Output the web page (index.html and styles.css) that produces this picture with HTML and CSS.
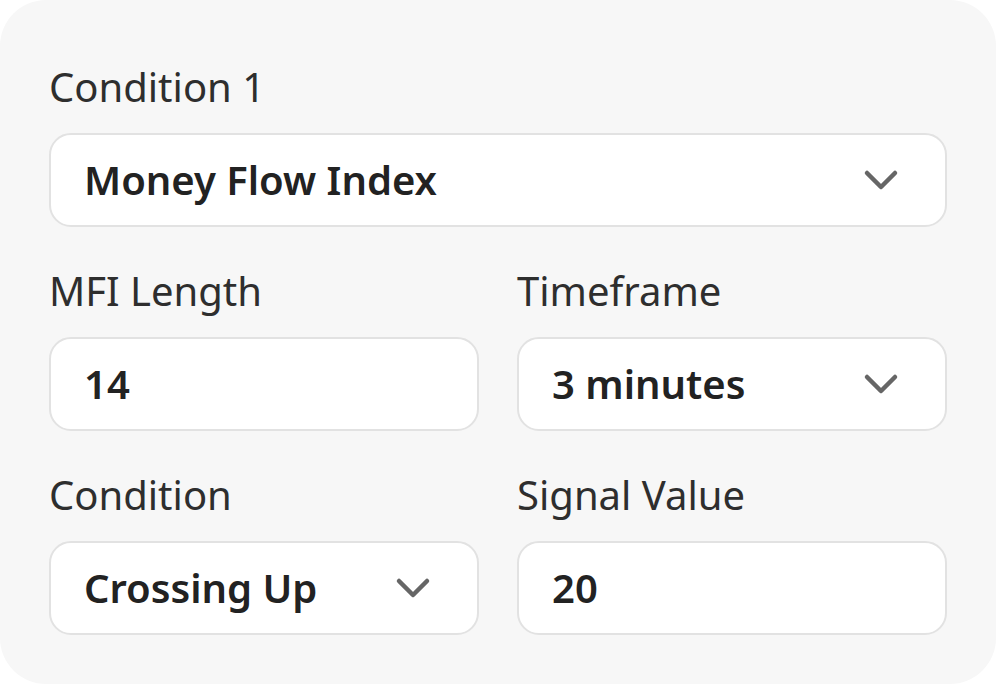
FILE: index.html
```html
<!DOCTYPE html>
<html lang="en">
<head>
<meta charset="utf-8">
<title>Condition</title>
<link rel="stylesheet" href="styles.css">
</head>
<body>
<div class="card">
  <div class="field">
    <div class="label">Condition 1</div>
    <div class="box">
      <span class="value">Money Flow Index</span>
      <svg class="chev" viewBox="0 0 36 22" width="36" height="22"><path d="M4 4 L18 18 L32 4" fill="none" stroke="#666" stroke-width="4.5" stroke-linecap="round" stroke-linejoin="round"/></svg>
    </div>
  </div>
  <div class="row">
    <div class="field">
      <div class="label">MFI Length</div>
      <div class="box"><span class="value">14</span></div>
    </div>
    <div class="field">
      <div class="label">Timeframe</div>
      <div class="box">
        <span class="value">3 minutes</span>
        <svg class="chev" viewBox="0 0 36 22" width="36" height="22"><path d="M4 4 L18 18 L32 4" fill="none" stroke="#666" stroke-width="4.5" stroke-linecap="round" stroke-linejoin="round"/></svg>
      </div>
    </div>
  </div>
  <div class="row">
    <div class="field">
      <div class="label">Condition</div>
      <div class="box">
        <span class="value">Crossing Up</span>
        <svg class="chev" viewBox="0 0 36 22" width="36" height="22"><path d="M4 4 L18 18 L32 4" fill="none" stroke="#666" stroke-width="4.5" stroke-linecap="round" stroke-linejoin="round"/></svg>
      </div>
    </div>
    <div class="field">
      <div class="label">Signal Value</div>
      <div class="box"><span class="value">20</span></div>
    </div>
  </div>
</div>
</body>
</html>
```

FILE: styles.css
```css
html, body {
  margin: 0;
  padding: 0;
  background: #ffffff;
}
body {
  font-family: "Noto Sans", "Open Sans", sans-serif;
  color: #2b2b2b;
}
.card {
  box-sizing: border-box;
  width: 996px;
  height: 684px;
  background: #f7f7f7;
  border-radius: 46px;
  padding: 60px 49px 49px 49px;
  display: flex;
  flex-direction: column;
  gap: 37px;
}
.row {
  display: grid;
  grid-template-columns: 1fr 1fr;
  column-gap: 38px;
}
.field {
  display: flex;
  flex-direction: column;
  gap: 19px;
}
.label {
  font-size: 40px;
  line-height: 54px;
  font-weight: 400;
  color: #2e2e2e;
}
.box {
  box-sizing: border-box;
  height: 94px;
  background: #ffffff;
  border: 2px solid #e2e2e2;
  border-radius: 22px;
  display: flex;
  align-items: center;
  justify-content: space-between;
  padding: 0 46px 0 33px;
}
.value {
  font-size: 40px;
  font-weight: 600;
  color: #222222;
  line-height: 54px;
}
.chev {
  display: block;
  flex: none;
}
```
